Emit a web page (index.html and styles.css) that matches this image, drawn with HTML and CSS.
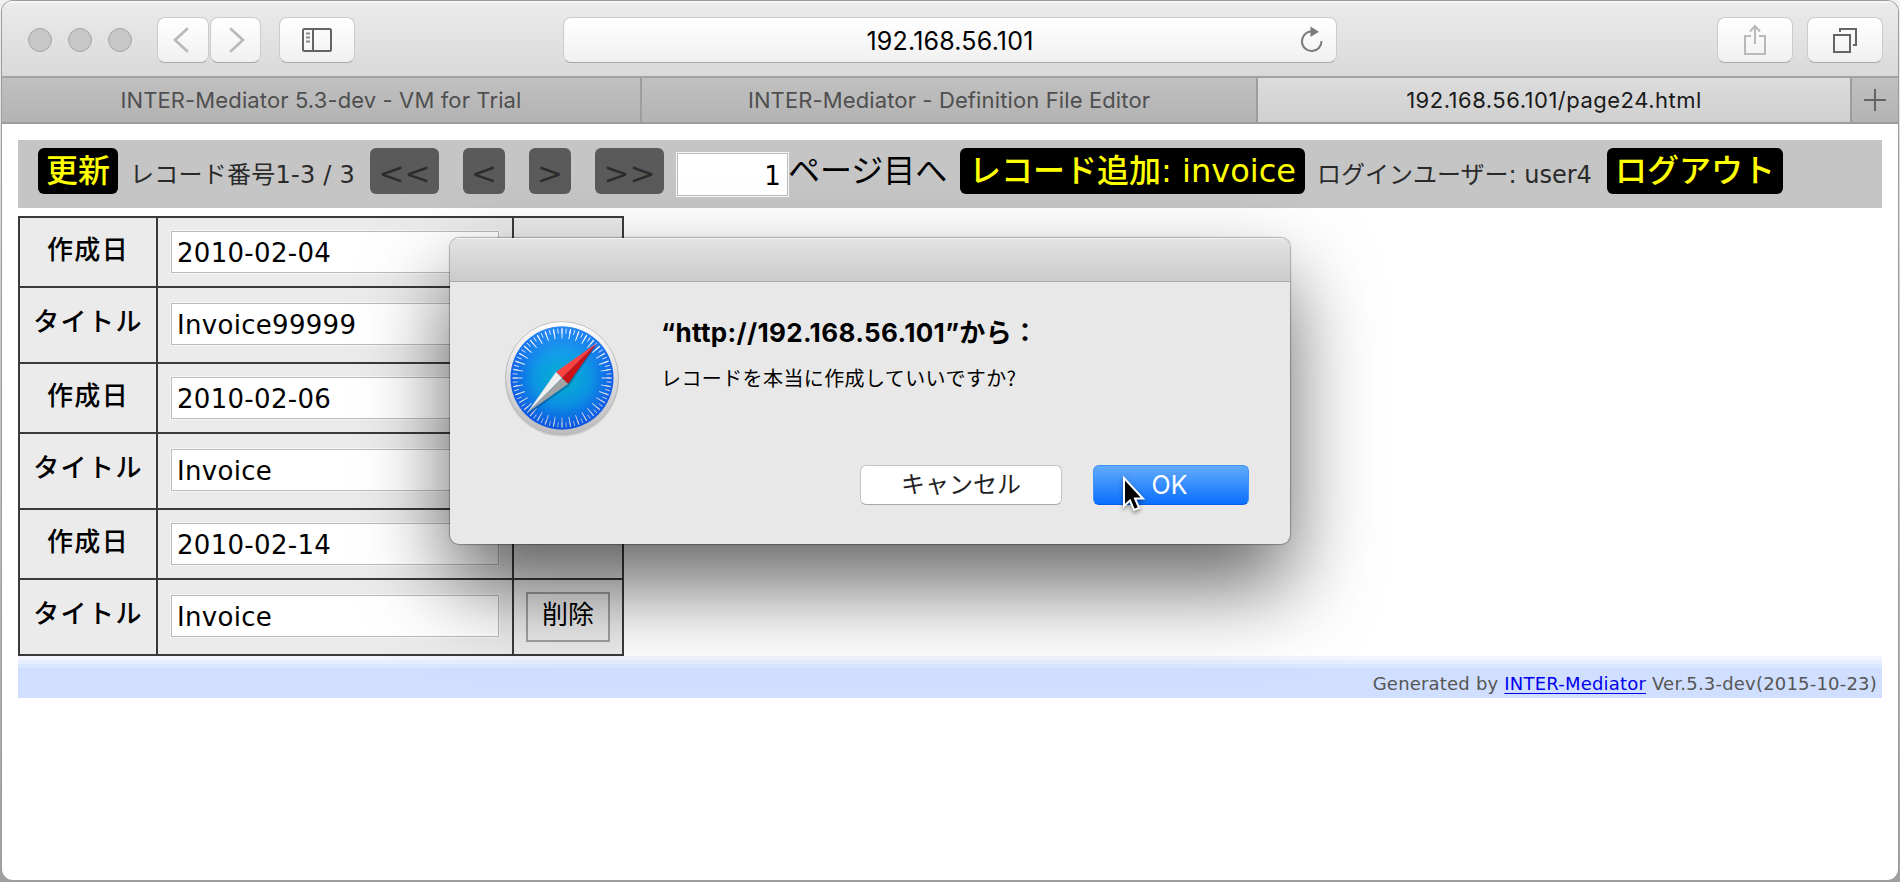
FILE: index.html
```html
<!DOCTYPE html>
<html lang="ja">
<head>
<meta charset="utf-8">
<title>192.168.56.101/page24.html</title>
<link rel="stylesheet" href="styles.css">
</head>
<body>
<div class="window">
  <header class="toolbar">
    <div class="lights"><i></i><i></i><i></i></div>
    <div class="nav">
      <span class="tbtn back"><svg width="16" height="26" viewBox="0 0 16 26"><path d="M14 2 2 13l12 11"/></svg></span>
      <span class="tbtn fwd"><svg width="16" height="26" viewBox="0 0 16 26"><path d="M2 2l12 11L2 24"/></svg></span>
    </div>
    <span class="tbtn side"><svg width="30" height="24" viewBox="0 0 30 24"><rect x="1" y="1" width="28" height="22" rx="1.5"/><path d="M11 1v22"/><path d="M4 5.500h4M4 9.500h4M4 13.500h4" stroke="#8a8a8a"/></svg></span>
    <div class="url"><span class="url-text">192.168.56.101</span>
      <svg class="reload" width="24" height="28" viewBox="0 0 24 28"><path d="M11 5.500A9.800 9.800 0 1 0 21.500 15" fill="none" stroke="#7b7b7b" stroke-width="2"/><path d="M10.500 0.500v10.500l8.500-5.200z" fill="#7b7b7b"/></svg>
    </div>
    <span class="tbtn share"><svg width="24" height="32" viewBox="0 0 24 32"><path d="M8 12H2v18h20V12h-6M12 20V2M7 7.500 12 2l5 5.500"/></svg></span>
    <span class="tbtn all"><svg width="26" height="26" viewBox="0 0 26 26"><path d="M2 8h16v17H2zM8 5V2h16v16h-3"/></svg></span>
  </header>
  <nav class="tabs">
    <div class="tab t1"><span>INTER-Mediator 5.3-dev - VM for Trial</span></div>
    <div class="tab t2"><span>INTER-Mediator - Definition File Editor</span></div>
    <div class="tab t3"><span>192.168.56.101/page24.html</span></div>
    <div class="tab add"><svg width="22" height="22" viewBox="0 0 22 22"><path d="M11 0v22M0 11h22" stroke="#646464" stroke-width="2"/></svg></div>
  </nav>
  <main class="page">
    <div class="navigator">
      <span class="btn update">更新</span>
      <span class="info count">レコード番号1-3 / 3</span>
      <span class="btn off wide">&lt;&lt;</span>
      <span class="btn off">&lt;</span>
      <span class="btn off">&gt;</span>
      <span class="btn off wide">&gt;&gt;</span>
      <input class="pageno" value="1">
      <span class="goto">ページ目へ</span>
      <span class="btn insert">レコード追加: <span class="lat">invoice</span></span>
      <span class="info user">ログインユーザー: user4</span>
      <span class="btn logout">ログアウト</span>
    </div>
    <table class="records">
      <colgroup><col class="c1"><col class="c2"><col class="c3"></colgroup>
      <tr class="date"><th>作成日</th><td><input value="2010-02-04"></td><td></td></tr>
      <tr class="name"><th>タイトル</th><td><input value="Invoice99999"></td><td></td></tr>
      <tr class="date"><th>作成日</th><td><input value="2010-02-06"></td><td></td></tr>
      <tr class="name"><th>タイトル</th><td><input value="Invoice"></td><td></td></tr>
      <tr class="date"><th>作成日</th><td><input value="2010-02-14"></td><td></td></tr>
      <tr class="name"><th>タイトル</th><td><input value="Invoice"></td><td><button class="del">削除</button></td></tr>
    </table>
    <footer class="credit"><span>Generated by <a href="#">INTER-Mediator</a> Ver.5.3-dev(2015-10-23)</span></footer>
  </main>
</div>

<section class="dialog">
  <div class="dialog-bar"></div>
  <div class="dialog-body">
    <svg class="compass" width="124" height="124" viewBox="-62 -62 124 124">
      <defs>
        <linearGradient id="rim" x1="0" y1="0" x2="0" y2="1"><stop offset="0" stop-color="#fdfdfd"/><stop offset="1" stop-color="#bcbcbf"/></linearGradient>
        <radialGradient id="face" cx=".5" cy=".5" r=".52"><stop offset="0" stop-color="#00b4c8"/><stop offset=".5" stop-color="#0a98e0"/><stop offset="1" stop-color="#1150e8"/></radialGradient>
        <linearGradient id="sheen" x1="0" y1="0" x2="0" y2="1"><stop offset="0" stop-color="#35aaff" stop-opacity=".6"/><stop offset=".5" stop-color="#1d9aff" stop-opacity=".05"/><stop offset="1" stop-color="#0048d0" stop-opacity=".3"/></linearGradient>
        <linearGradient id="ticks" x1="0" y1="0" x2="0" y2="1"><stop offset="0" stop-color="#fff"/><stop offset="1" stop-color="#b5c4d8"/></linearGradient>
        <mask id="dial"><circle r="47" fill="none" stroke="#fff" stroke-width="5" stroke-dasharray="1 4" stroke-dashoffset=".5" pathLength="360"/><circle r="44.500" fill="none" stroke="#fff" stroke-width="10" stroke-dasharray="1.300 8.700" stroke-dashoffset=".65" pathLength="360"/></mask>
      </defs>
      <circle r="57" cy="1.500" fill="#000" opacity=".12"/>
      <circle r="56.500" fill="url(#rim)" stroke="#b4b4b4" stroke-width=".8"/>
      <circle r="51.500" fill="url(#face)"/><circle r="51.500" fill="url(#sheen)"/>
      <rect x="-52" y="-52" width="104" height="104" fill="url(#ticks)" mask="url(#dial)"/>
      <path d="M35-33 7 8-34 37-3-1z" fill="#003060" opacity=".35"/>
      <path d="M35-35-6-6 0 0z" fill="#ff4242"/><path d="M35-35 6 6 0 0z" fill="#cb1016"/>
      <path d="M-35 35-6-6 0 0z" fill="#eee"/><path d="M-35 35 6 6 0 0z" fill="#a3a3a3"/>
    </svg>
    <div class="message">
      <h1><span class="host">“http://192.168.56.101”</span>から<span class="colon">：</span></h1>
      <p>レコードを本当に作成していいですか?</p>
      <div class="actions"><button class="cancel">キャンセル</button><button class="ok">OK</button></div>
    </div>
  </div>
</section>
<svg class="cursor" width="30" height="42" viewBox="0 0 30 42"><path d="M3 2v28l6-5.500 4 9.500 5-2.200-4-9.300h8z" fill="#000" stroke="#fff" stroke-width="2"/></svg>
</body>
</html>
```
FILE: styles.css
```css
* { box-sizing: border-box; }
body {
  margin: 0; width: 1900px; height: 882px; overflow: hidden; position: relative;
  background: linear-gradient(#f0f0f0, #c8c8c8 40%, #a0a0a0);
  padding: 1px 2px 2px; color: #000;
  font-family: "DejaVu Sans", "Noto Sans CJK JP", sans-serif;
}
.window {
  height: 879px; background: #fff; border-radius: 11px; overflow: hidden;
  display: flex; flex-direction: column; box-shadow: 0 0 0 1px #9c9c9c;
}
.toolbar {
  height: 77px; flex: none; display: flex; align-items: center;
  padding: 0 15px 0 26px; background: linear-gradient(#ebebeb, #d9d9d9);
  border-top: 2px solid #f6f6f6; border-bottom: 2px solid #a2a2a2;
}
.lights { display: flex; gap: 16px; margin-right: 25px; }
.lights i { width: 24px; height: 24px; border-radius: 50%; background: #c7c7c7; border: 1px solid #a6a6a6; }
.nav { display: flex; gap: 1px; margin-right: 18px; }
.tbtn, .url {
  height: 46px; display: flex; align-items: center; justify-content: center;
  border: 1px solid #cbcbcb; border-bottom-color: #a8a8a8; border-radius: 8px;
  background: linear-gradient(#fff, #f8f8f8 50%, #f0f0f0);
}
.tbtn svg { fill: none; stroke: #646464; stroke-width: 2; }
.back { width: 52px; padding-right: 5px; }
.fwd { width: 51px; padding-left: 3px; }
.back svg, .fwd svg { stroke: #b9b9b9; stroke-width: 2.700; stroke-linecap: round; }
.side { width: 76px; }
.url { width: 774px; margin-left: 208px; margin-right: 380px; position: relative; }
.url-text { font: 25px Inter, sans-serif; padding-top: 2px; letter-spacing: .2px; }
.reload { position: absolute; right: 12px; top: 8px; }
.share { width: 76px; margin-right: 14px; }
.share svg { stroke: #b9b9b9; }
.all { width: 76px; }
.tabs { height: 46px; flex: none; display: flex; background: linear-gradient(#c0c0c0, #b3b3b3); border-bottom: 2px solid #9c9c9c; }
.tab {
  display: flex; align-items: center; justify-content: center;
  font: 22px Inter, sans-serif; letter-spacing: .12px; color: #4f4f4f; border-right: 2px solid #9d9d9d;
}
.t1 { width: 640px; }
.t2 { width: 616px; }
.t3 { width: 594px; color: #1a1a1a; background: linear-gradient(#dcdcdc, #d0d0d0); letter-spacing: .5px; }
.add { flex: 1; border: 0; }
.page { padding: 16px 16px 0; }
.navigator {
  height: 68px; background: #c5c5c5; display: flex; align-items: flex-start;
  padding: 8px 0 0 20px; white-space: nowrap;
}
.btn {
  height: 46px; border-radius: 6px; background: #000; color: #ff0; font-size: 32px; line-height: 47px;
  display: flex; justify-content: center; font-family: "DejaVu Sans", "Noto Sans CJK JP", sans-serif; font-weight: 500;
}
.update { width: 80px; }
.info { font-size: 24px; line-height: 54px; color: #2a2a2a; }
.count { width: 252px; padding-left: 12px; letter-spacing: .25px; }
.off { width: 42px; margin-right: 24px; background: #5a5a5a; color: #2c2c2c; font-size: 31px; line-height: 50px; }
.off.wide { width: 69px; }
.off.wide ~ .off.wide { margin-right: 13px; }
.pageno, .records input {
  font: 26px "DejaVu Sans", sans-serif; letter-spacing: .3px; background: #fff; color: #000;
  border: 1px solid #bbb; outline: 1px solid #f6f6f6; border-radius: 0;
}
.pageno { width: 111px; height: 43px; margin-top: 5px; padding: 2px 6px 0; text-align: right; }
.goto { width: 172px; font-size: 32px; line-height: 46px; }
.insert { width: 345px; white-space: pre; }
.user { width: 302px; padding-left: 12px; }
.logout { width: 176px; }
.records { border-collapse: collapse; table-layout: fixed; width: 606px; margin-top: 8px; background: #ebebeb; }
.c1 { width: 138px; } .c2 { width: 356px; } .c3 { width: 110px; }
.date { height: 70px; } .name { height: 76px; }
.records th, .records td { border: 2px solid #3a3a3a; padding: 0; vertical-align: top; }
.records th { font-size: 26px; line-height: 32px; font-weight: 500; letter-spacing: 1.400px; padding-top: 16px; }
.records .name th { padding-top: 18px; }
.records td { padding: 13px 12px 0 13px; }
.name td { padding-top: 15px; }
.records input { display: block; width: 328px; height: 42px; padding: 2px 5px 0; }
.records .name td:last-child { padding: 12px 12px 0; }
.del {
  display: block; width: 84px; height: 50px; padding: 0 0 8px; background: transparent;
  border: 2px solid #a0a0a0; font: 26px/36px "Noto Sans CJK JP", sans-serif; color: #000;
}
.credit {
  height: 42px; display: flex; justify-content: flex-end; padding: 14px 5px 0 0;
  font-size: 18px; line-height: 28px; letter-spacing: .2px; color: #555;
  background: linear-gradient(#f2f5ff 4px, #e6eeff 4px 8px, #dbe6ff 8px 12px, #d0dfff 12px);
}
.credit a { color: #00e; text-decoration-thickness: 1px; text-underline-offset: 3px; }
.dialog {
  position: absolute; left: 450px; top: 238px; width: 840px; height: 306px;
  border-radius: 9px; background: #e8e8e8; overflow: hidden;
  box-shadow: 0 0 1px 1px rgba(0,0,0,.28), 0 42px 84px rgba(0,0,0,.6);
}
.dialog-bar { height: 44px; background: linear-gradient(#e3e3e3, #cbcbcb); border-top: 1px solid #f5f5f5; border-bottom: 1px solid #ababab; }
.dialog-body { display: flex; padding: 34px 41px 0 50px; }
.compass { flex: none; margin-right: 37px; }
.message { flex: 1; }
.message h1 { margin: 1px 0 0; font: bold 26px/32px Inter, "Noto Sans CJK JP", sans-serif; letter-spacing: .35px; white-space: nowrap; }
.message p { margin: 15px 0 0; font: 20px/28px "Noto Sans CJK JP", sans-serif; letter-spacing: .4px; white-space: nowrap; }
.actions { display: flex; justify-content: flex-end; gap: 31px; margin-top: 73px; }
.actions button { height: 40px; padding: 0; border-radius: 6px; font: 24px/34px Inter, "Noto Sans CJK JP", sans-serif; }
.cancel { width: 202px; background: #fff; border: 1px solid #c4c4c4; border-bottom-color: #a8a8a8; color: #222; }
.actions .ok { width: 156px; font-size: 25px; padding-right: 3px; color: #fff; border: 1px solid #3f92f3; border-bottom-color: #0060e8; background: linear-gradient(#62abfa, #0a6fff); }
.cursor { position: absolute; left: 1121px; top: 476px; filter: drop-shadow(0 2px 2px rgba(0,0,0,.45)); }
```
